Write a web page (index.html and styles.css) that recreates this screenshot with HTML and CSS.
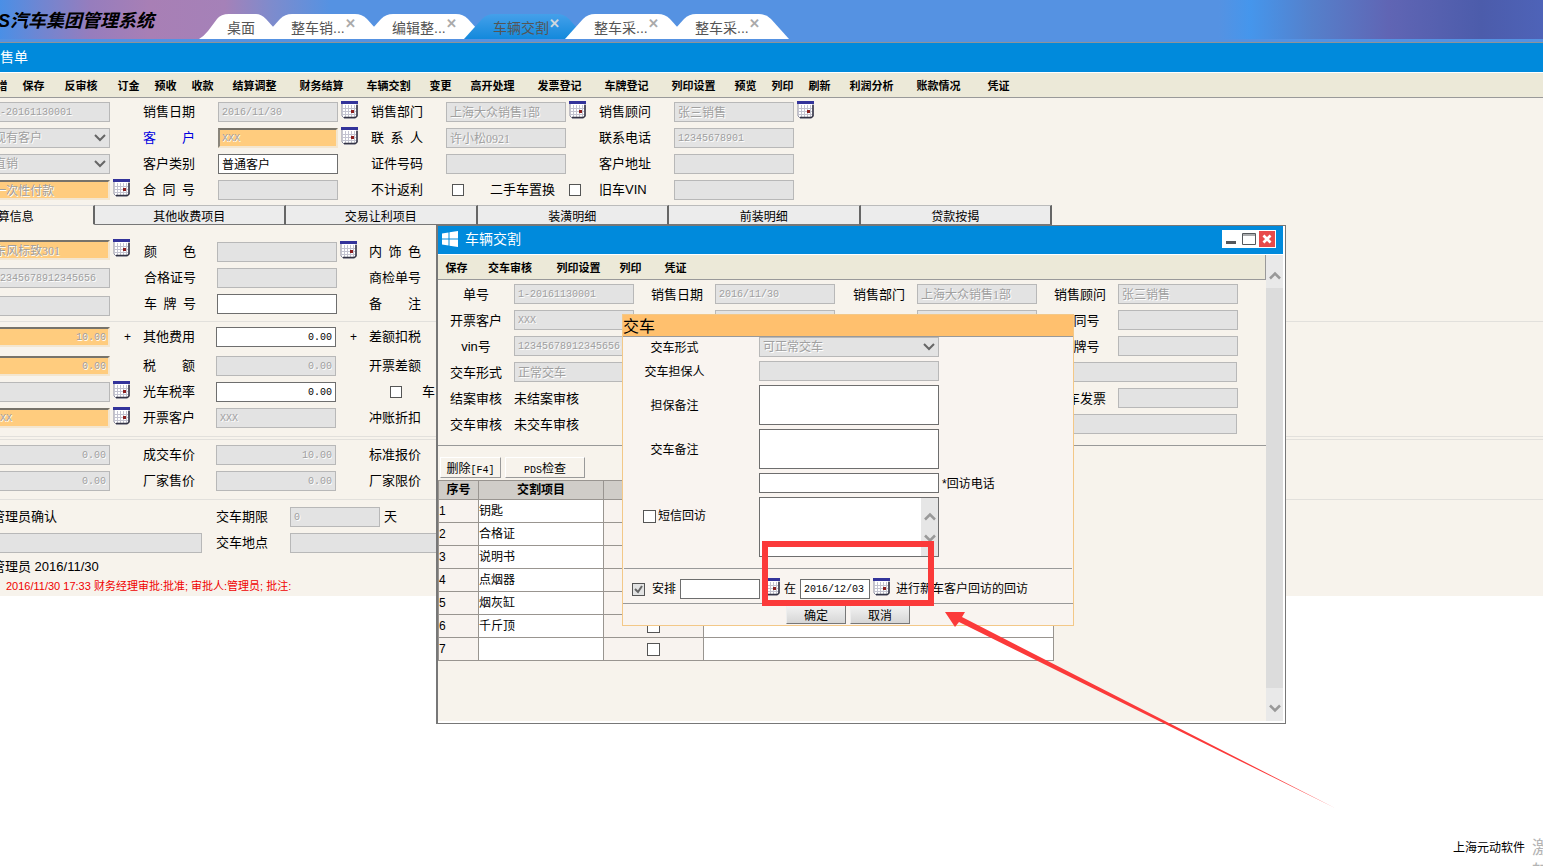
FILE: index.html
```
<!DOCTYPE html>
<html lang="zh-CN">
<head>
<meta charset="UTF-8" />
<meta name="viewport" content="width=device-width, initial-scale=1" />
<title>汽车集团管理系统</title>
<link rel="stylesheet" href="styles.css">
</head>
<body>

<svg class="defs" aria-hidden="true">
  <symbol id="cal" viewBox="0 0 17 18">
    <path d="M1 2h15v13l-2 2H3l-2-2z" fill="#fff" stroke="#8c8ca0"/>
    <path d="M4.500 4v12M7.500 4v12M10.500 4v12M13.500 4v12M1 7.500h15M1 10.500h15M1 13.500h15" stroke="#c3c3d0" fill="none"/>
    <path d="M16 4v11l-1.500 1.500H3" stroke="#333344" stroke-width="1.500" fill="none"/>
    <rect x="0" y="0" width="17" height="3" fill="#33339a"/>
    <rect x="10" y="9" width="3" height="3" fill="#8c2020"/>
  </symbol>
  <symbol id="up" viewBox="0 0 12 9"><path d="M1 7.500L6 2.500l5 5" fill="none" stroke="#999" stroke-width="2.500"/></symbol>
  <symbol id="down" viewBox="0 0 12 9"><path d="M1 1.500l5 5 5-5" fill="none" stroke="#999" stroke-width="2.500"/></symbol>
</svg>

<header class="top">
  <h1>S汽车集团管理系统</h1>
  <nav class="pages">
    <a class="page home" href="#">桌面</a>
    <a class="page" href="#">整车销...<span class="x">✕</span></a>
    <a class="page" href="#">编辑整...<span class="x">✕</span></a>
    <a class="page active" href="#">车辆交割<span class="x">✕</span></a>
    <a class="page" href="#">整车采...<span class="x">✕</span></a>
    <a class="page" href="#">整车采...<span class="x">✕</span></a>
  </nav>
</header>

<main>
  <h2 class="bar">销售单</h2>
  <div class="tools sheet-tools">
    <button>新增</button>
    <button>保存</button>
    <button class="w3">反审核</button>
    <button>订金</button>
    <button>预收</button>
    <button>收款</button>
    <button class="w4">结算调整</button>
    <button class="w4">财务结算</button>
    <button class="w4">车辆交割</button>
    <button>变更</button>
    <button class="w4">高开处理</button>
    <button class="w4">发票登记</button>
    <button class="w4">车牌登记</button>
    <button class="w4">列印设置</button>
    <button>预览</button>
    <button>列印</button>
    <button>刷新</button>
    <button class="w4">利润分析</button>
    <button class="w4">账款情况</button>
    <button class="last">凭证</button>
  </div>

  <form class="sheet">
    <section class="cols head">
      <div class="col first">
        <div class="row"><input class="num" aria-label="单号" value="1-20161130001" disabled></div>
        <div class="row"><select aria-label="客户来源" disabled><option>现有客户</option></select></div>
        <div class="row"><select aria-label="销售类型" disabled><option>直销</option></select></div>
        <div class="row"><input class="must" aria-label="付款方式" value="一次性付款" disabled><button type="button" class="cal" aria-label="选择"><svg><use href="#cal"/></svg></button></div>
      </div>
      <div class="col">
        <div class="row"><label for="a1">销售日期</label><input class="num" id="a1" value="2016/11/30" disabled><button type="button" class="cal" aria-label="选择"><svg><use href="#cal"/></svg></button></div>
        <div class="row"><label class="link" for="a2">客　　户</label><input class="num must" id="a2" value="XXX" disabled><button type="button" class="cal" aria-label="选择"><svg><use href="#cal"/></svg></button></div>
        <div class="row"><label for="a3">客户类别</label><input id="a3" value="普通客户"></div>
        <div class="row"><label for="a4">合&ensp;同&ensp;号</label><input id="a4" disabled></div>
      </div>
      <div class="col">
        <div class="row"><label for="b1">销售部门</label><input id="b1" value="上海大众销售1部" disabled><button type="button" class="cal" aria-label="选择"><svg><use href="#cal"/></svg></button></div>
        <div class="row"><label for="b2">联&ensp;系&ensp;人</label><input id="b2" value="许小松0921" disabled></div>
        <div class="row"><label for="b3">证件号码</label><input id="b3" disabled></div>
        <div class="row"><label class="wide" for="b4">不计返利</label><input type="checkbox" id="b4"><label class="used" for="b5">二手车置换</label><input type="checkbox" id="b5"></div>
      </div>
      <div class="col">
        <div class="row"><label for="c1">销售顾问</label><input id="c1" value="张三销售" disabled><button type="button" class="cal" aria-label="选择"><svg><use href="#cal"/></svg></button></div>
        <div class="row"><label for="c2">联系电话</label><input class="num" id="c2" value="12345678901" disabled></div>
        <div class="row"><label for="c3">客户地址</label><input id="c3" disabled></div>
        <div class="row"><label for="c4">旧车VIN</label><input id="c4" disabled></div>
      </div>
    </section>

    <div class="tabs">
      <button type="button" class="on">车款结算信息</button>
      <button type="button">其他收费项目</button>
      <button type="button">交易让利项目</button>
      <button type="button">装潢明细</button>
      <button type="button">前装明细</button>
      <button type="button">贷款按揭</button>
    </div>

    <section class="cols narrow car">
      <div class="col first loose">
        <div class="row"><input class="must" aria-label="车型" value="东风标致301" disabled><button type="button" class="cal" aria-label="选择"><svg><use href="#cal"/></svg></button></div>
        <div class="row"><input class="num" aria-label="vin号" value="12345678912345656" disabled></div>
        <div class="row"><input aria-label="发动机号" disabled></div>
      </div>
      <div class="col">
        <div class="row"><label for="d1">颜　　色</label><input id="d1" disabled><button type="button" class="cal" aria-label="选择"><svg><use href="#cal"/></svg></button></div>
        <div class="row"><label for="d2">合格证号</label><input id="d2" disabled></div>
        <div class="row"><label for="d3">车&ensp;牌&ensp;号</label><input id="d3"></div>
      </div>
      <div class="col">
        <div class="row"><label>内&ensp;饰&ensp;色</label></div>
        <div class="row"><label>商检单号</label></div>
        <div class="row"><label>备　　注</label></div>
      </div>
    </section>

    <section class="cols narrow price">
      <div class="col first">
        <div class="row"><input class="num must sum" aria-label="车价" value="10.00" disabled><span class="plus">+</span></div>
        <div class="row"><input class="num must sum" aria-label="合计" value="0.00" disabled></div>
        <div class="row"><input aria-label="税种" disabled><button type="button" class="cal" aria-label="选择"><svg><use href="#cal"/></svg></button></div>
        <div class="row"><input class="num must" aria-label="结算客户" value="XXX" disabled><button type="button" class="cal" aria-label="选择"><svg><use href="#cal"/></svg></button></div>
      </div>
      <div class="col">
        <div class="row"><label for="e1">其他费用</label><input class="num sum" id="e1" value="0.00"><span class="plus">+</span></div>
        <div class="row"><label for="e2">税　　额</label><input class="num sum" id="e2" value="0.00" disabled></div>
        <div class="row"><label for="e3">光车税率</label><input class="num sum" id="e3" value="0.00"></div>
        <div class="row"><label for="e4">开票客户</label><input class="num" id="e4" value="XXX" disabled></div>
      </div>
      <div class="col">
        <div class="row"><label>差额扣税</label></div>
        <div class="row"><label>开票差额</label></div>
        <div class="row ship"><input type="checkbox" id="f3"><label for="f3">车</label></div>
        <div class="row"><label>冲账折扣</label></div>
      </div>
    </section>

    <section class="cols narrow quote">
      <div class="col first">
        <div class="row"><input class="num sum" aria-label="优惠" value="0.00" disabled></div>
        <div class="row"><input class="num sum" aria-label="返利" value="0.00" disabled></div>
      </div>
      <div class="col">
        <div class="row"><label for="g1">成交车价</label><input class="num sum" id="g1" value="10.00" disabled></div>
        <div class="row"><label for="g2">厂家售价</label><input class="num sum" id="g2" value="0.00" disabled></div>
      </div>
      <div class="col">
        <div class="row"><label>标准报价</label></div>
        <div class="row"><label>厂家限价</label></div>
      </div>
    </section>

    <section class="deliver">
      <div class="row"><span class="confirm">管理员确认</span><label for="h1">交车期限</label><input class="num days" id="h1" value="0" disabled><span class="unit">天</span></div>
      <div class="row"><input class="memo" aria-label="说明" disabled><label for="h2">交车地点</label><input class="place" id="h2" disabled></div>
    </section>
    <p class="maker">管理员 2016/11/30</p>
    <p class="audit">2016/11/30 17:33 财务经理审批:批准; 审批人:管理员; 批注:</p>
  </form>
</main>

<footer>
  <span>上海元动软件</span>
  <div class="activate">激活 Windows<br>转到“设置”</div>
</footer>

<div class="window">
  <div class="caption">
    <svg class="win" viewBox="0 0 16 16"><path d="M0 2.500L6.500 1.500v6H0zM7.500 1.300L16 0v7.500H7.500zM0 8.500h6.500v6L0 13.500zM7.500 8.500H16V16l-8.500-1.300z" fill="#fff"/></svg>
    <h2>车辆交割</h2>
    <div class="ctl">
      <button aria-label="最小化"><svg viewBox="0 0 18 18"><rect x="4" y="11" width="10" height="3" fill="#55585c"/></svg></button>
      <button aria-label="最大化"><svg viewBox="0 0 18 18"><path d="M2.500 3.500h13v11h-13zM2 5h14" fill="none" stroke="#55585c"/></svg></button>
      <button class="close" aria-label="关闭"><svg viewBox="0 0 18 18"><path d="M5 5l8 8M13 5l-8 8" stroke="#fff" stroke-width="3"/></svg></button>
    </div>
  </div>

  <div class="inner">
    <div class="pane">
      <div class="tools">
        <button>保存</button>
        <button class="w4 more">交车审核</button>
        <button class="w4">列印设置</button>
        <button>列印</button>
        <button class="last">凭证</button>
      </div>
      <form class="info">
        <label for="i1">单号</label><input class="num" id="i1" value="1-20161130001" disabled>
        <label for="i2">销售日期</label><input class="num" id="i2" value="2016/11/30" disabled>
        <label for="i3">销售部门</label><input id="i3" value="上海大众销售1部" disabled>
        <label for="i4">销售顾问</label><input id="i4" value="张三销售" disabled>

        <label for="j1">开票客户</label><input class="num" id="j1" value="XXX" disabled>
        <input class="second" aria-label="颜色" disabled>
        <input class="third" aria-label="车型" disabled>
        <label for="j4">合同号</label><input id="j4" disabled>

        <label for="k1">vin号</label><input class="num" id="k1" value="12345678912345656" disabled>
        <input class="second" aria-label="发动机号" disabled>
        <input class="third" aria-label="合格证" disabled>
        <label for="k4">车牌号</label><input id="k4" disabled>

        <label for="l1">交车形式</label><input id="l1" value="正常交车" disabled>
        <input class="span" aria-label="担保人" disabled>

        <span class="name">结案审核</span><span>未结案审核</span>
        <label class="far" for="m4">购车发票</label><input id="m4" disabled>

        <span class="name">交车审核</span><span>未交车审核</span>
        <input class="span" aria-label="备注" disabled>
      </form>
      <div class="acts">
        <button>删除<span>[F4]</span></button>
        <button class="pds"><span>PDS</span>检查</button>
      </div>
      <table>
        <thead><tr><th class="no">序号</th><th class="item">交割项目</th><th class="ok"></th><th></th></tr></thead>
        <tbody>
          <tr><td>1</td><td>钥匙</td><td><input type="checkbox" aria-label="确认1"></td><td></td></tr>
          <tr><td>2</td><td>合格证</td><td><input type="checkbox" aria-label="确认2"></td><td></td></tr>
          <tr><td>3</td><td>说明书</td><td><input type="checkbox" aria-label="确认3"></td><td></td></tr>
          <tr><td>4</td><td>点烟器</td><td><input type="checkbox" aria-label="确认4"></td><td></td></tr>
          <tr><td>5</td><td>烟灰缸</td><td><input type="checkbox" aria-label="确认5"></td><td></td></tr>
          <tr><td>6</td><td>千斤顶</td><td><input type="checkbox" aria-label="确认6"></td><td></td></tr>
          <tr><td>7</td><td></td><td><input type="checkbox" aria-label="确认7"></td><td></td></tr>
        </tbody>
      </table>
    </div>
    <div class="scroll">
      <span class="arrow"><svg><use href="#up"/></svg></span>
      <span class="arrow"><svg><use href="#down"/></svg></span>
    </div>
  </div>

  <form class="modal">
    <h3>交车</h3>
    <div class="fields">
      <label for="p1">交车形式</label><select id="p1" disabled><option>可正常交车</option></select>
      <label for="p2">交车担保人</label><input id="p2" disabled>
      <label for="p3">担保备注</label><textarea id="p3"></textarea>
      <label for="p4">交车备注</label><textarea id="p4"></textarea>
      <input class="phone" id="p5"><label class="after" for="p5">*回访电话</label>
      <label class="sms"><input type="checkbox">短信回访</label>
      <div class="sms-text">
        <textarea aria-label="短信内容"></textarea>
        <div class="mini"><svg><use href="#up"/></svg><svg><use href="#down"/></svg></div>
      </div>
    </div>
    <div class="plan">
      <label><input type="checkbox" checked disabled>安排</label>
      <input class="who" aria-label="回访人">
      <button type="button" class="cal" aria-label="选择"><svg><use href="#cal"/></svg></button>
      <span>在</span>
      <input class="num when" aria-label="回访日期" value="2016/12/03">
      <button type="button" class="cal" aria-label="选择"><svg><use href="#cal"/></svg></button>
      <span class="rest">进行新车客户回访的回访</span>
    </div>
    <div class="btns">
      <button type="button">确定</button>
      <button type="button">取消</button>
    </div>
  </form>
</div>

<!-- red marker over the revisit date -->
<svg class="mark" viewBox="0 0 580 270" aria-hidden="true">
  <rect x="3" y="3" width="166" height="59" fill="none" stroke="#fb3a3a" stroke-width="6"/>
  <path d="M183 71h20l-3 5L573 267 197 81l-4 5z" fill="#fb3a3a"/>
</svg>

</body>
</html>
```
FILE: styles.css
```
* {
  box-sizing: border-box;
}
body {
  margin: 0;
  height: 100vh;
  overflow: hidden;
  position: relative;
  display: flex;
  flex-direction: column;
  background: #fff;
  color: #000;
  font-family: "Liberation Sans", "Noto Sans CJK SC", sans-serif;
  font-size: 13px;
  line-height: 20px;
}
h1, h2, h3, p {
  margin: 0;
  font-weight: normal;
}
button, input, select, textarea {
  font-family: inherit;
  margin: 0;
  padding: 0;
  border-radius: 0;
  color: #000;
}
.defs {
  position: absolute;
  width: 0;
  height: 0;
}

/* header and page tabs */
.top {
  height: 43px;
  display: flex;
  border-bottom: 1px solid #8d9399;
  background:
    linear-gradient(#5592e2, #5592e2) bottom / 100% 3px no-repeat,
    linear-gradient(90deg, #4a8fe6 0, #6f86d2 40px, #967dbd 90px, #a87fb5 150px, #a581b8 225px, #7f8bcc 270px, #5592e2 330px,
      #5592e2 79%, #4596ec 81%, #5580cb 85%, #6065b4 90%, #4c5cab 96%, #4e63b8 100%);
}
.top h1 {
  width: 199px;
  font-size: 18px;
  font-weight: bold;
  font-style: italic;
  line-height: 43px;
  white-space: nowrap;
}
.top h1 {
  text-indent: -2px;
}
.pages {
  display: flex;
  padding-top: 14px;
}
.page {
  width: 123px;
  height: 25px;
  margin-right: -22px;
  padding-left: 29px;
  background: #fff;
  color: #555;
  font-size: 14px;
  line-height: 28px;
  text-decoration: none;
  white-space: nowrap;
  clip-path: path("M0 25L18 5Q23 0 30 0H93Q100 0 105 5L123 25Z");
}
.page.home {
  width: 85px;
  padding-left: 28px;
  clip-path: path("M0 25Q5 22 9 17L18 5Q22 0 30 0H57Q62 0 67 5L85 25Z");
}
.page.active {
  position: relative;
  background: linear-gradient(#45a0ea, #1389dc);
}
.x {
  display: inline-block;
  vertical-align: top;
  font-size: 13px;
  line-height: 20px;
  font-weight: bold;
  color: #aaa;
}
.active .x {
  color: #cfd8de;
}

/* sheet */
.bar {
  height: 30px;
  background: #008adc;
  border-bottom: 1px solid #fff;
  color: #fff;
  font-size: 14px;
  line-height: 29px;
  text-indent: -14px;
}
.tools {
  height: 25px;
  display: flex;
  background: #ece9d8;
  border-bottom: 1px solid #999;
}
.sheet-tools button:first-child {
  margin-left: -22px;
}
.tools button {
  flex: none;
  width: 37px;
  padding-bottom: 1px;
  border: 0;
  background: none;
  font-size: 11px;
  font-weight: bold;
  white-space: nowrap;
}
.tools .w3 {
  width: 58px;
}
.tools .w4 {
  width: 67px;
}
.tools .more {
  width: 70px;
}
.tools .last {
  width: 53px;
}
.sheet {
  background: #f7f3ec;
  overflow: hidden;
}
.cols {
  display: grid;
  grid-template-columns: 143px 228px 228px 1fr;
}
.narrow {
  grid-template-columns: 143px 226px 1fr;
}
.col {
  display: flex;
  flex-direction: column;
  gap: 6px;
}
.first {
  margin-left: -10px;
}
.row {
  display: flex;
  align-items: center;
  height: 20px;
  white-space: nowrap;
}
.row label {
  width: 75px;
}
.narrow .row label {
  width: 73px;
}
.row .link {
  color: #0000e0;
}
label, .name, .confirm, .unit {
  line-height: 22px;
}
input, select, textarea {
  flex: none;
  width: 120px;
  height: 20px;
  padding: 0 3px;
  border: 1px solid #6e6e6e;
  background: #fff;
  font-family: "Liberation Serif", "Noto Sans CJK SC", serif;
  font-size: 12px;
  resize: none;
}
input:disabled, select:disabled {
  background-color: #e3e3e3;
  border-color: #b8b8b8;
  color: #a0a0a0;
  text-shadow: 1px 1px #fff;
  opacity: 1;
}
select {
  appearance: none;
  background-image: url("data:image/svg+xml,%3Csvg xmlns='http://www.w3.org/2000/svg' width='12' height='8'%3E%3Cpath d='M1 1l5 5 5-5' fill='none' stroke='%23666' stroke-width='2'/%3E%3C/svg%3E");
  background-repeat: no-repeat;
  background-position: right 3px center;
}
input.num {
  font-family: "Liberation Mono", monospace;
  font-size: 10px;
}
input.must:disabled {
  background: #ffcc7e;
  border: 2px solid;
  border-color: #77736a #f3e6d0 #f3e6d0 #8a857b;
  padding: 0 2px;
}
input.sum {
  text-align: right;
}
input[type=checkbox] {
  appearance: none;
  width: 12px;
  height: 12px;
  padding: 0;
  border: 1px solid #555;
}
.cal {
  flex: none;
  width: 17px;
  height: 18px;
  margin: 0 0 4px 3px;
  border: 0;
  background: none;
}
.cal svg {
  display: block;
  width: 17px;
  height: 18px;
}
.plus {
  margin-left: 14px;
  font-size: 12px;
}
.head {
  padding: 4px 0 5px;
}
.row label.wide {
  width: 81px;
}
.row label.used {
  width: 105px;
  padding-left: 26px;
}
.tabs {
  display: flex;
  width: 1149px;
  margin-left: -97px;
}
.tabs button {
  flex: 1;
  height: 20px;
  border: 0;
  border-top: 1px solid #bbb;
  border-right: 2px solid #666;
  border-bottom: 1px solid #777;
  background: #ececec;
  font-size: 12px;
  line-height: 22px;
}
.tabs .on {
  background: none;
  border-top-color: #ddd;
  border-bottom-color: transparent;
}
.car {
  padding: 15px 0 5px;
}
.car .col {
  padding: 2px 0 0 1px;
}
.car .col + .col + .col {
  padding-left: 0;
}
.car .loose {
  gap: 8px;
  padding: 0;
}
.price {
  padding: 5px 0 8px;
  border-top: 1px solid #e2e0dc;
  border-bottom: 1px solid #e2e0dc;
}
.price .row:first-child {
  margin-bottom: 3px;
}
.ship {
  padding-left: 21px;
  gap: 20px;
}
.quote {
  margin-top: 2px;
  padding: 5px 0 8px;
  border-top: 1px solid #e2e0dc;
}
.deliver {
  display: flex;
  flex-direction: column;
  gap: 6px;
  margin-left: -10px;
  padding-top: 7px;
  border-top: 1px solid #e2e0dc;
}
.deliver label {
  width: 74px;
}
.confirm {
  width: 226px;
  padding-left: 2px;
}
.memo {
  width: 212px;
  margin-right: 14px;
}
.days {
  width: 90px;
}
.unit {
  margin-left: 4px;
}
.place {
  width: 348px;
}
.maker {
  margin: 4px 0 0 -8px;
}
.audit {
  padding-left: 6px;
  color: #f00000;
  font-size: 11px;
  line-height: 19px;
}

footer {
  margin-top: auto;
  height: 30px;
  display: flex;
  justify-content: flex-end;
  font-size: 12px;
  line-height: 24px;
}
.activate {
  width: 11px;
  margin-left: 7px;
  overflow: hidden;
  white-space: nowrap;
  color: #b4b4b4;
  font-size: 18px;
}

/* delivery window */
.window {
  position: absolute;
  left: 436px;
  top: 225px;
  width: 850px;
  height: 499px;
  display: flex;
  flex-direction: column;
  padding-right: 2px;
  padding-bottom: 2px;
  background: #fff;
  border: 1px solid #777;
  border-left-width: 2px;
}
.caption {
  height: 29px;
  display: flex;
  align-items: center;
  padding: 0 7px 2px 4px;
  background: #008adc;
  border-bottom: 1px solid #fff;
}
.win {
  width: 16px;
  height: 16px;
}
.caption h2 {
  flex: 1;
  margin-left: 7px;
  color: #fff;
  font-size: 14px;
}
.ctl {
  display: flex;
  background: #fff;
}
.ctl button {
  width: 18px;
  height: 18px;
  border: 0;
  background: none;
}
.ctl .close {
  background: #e84a4a;
  border: 1px solid #fff;
}
.ctl svg {
  display: block;
}
.inner {
  flex: 1;
  display: flex;
}
.pane {
  flex: 1;
  background: #f7f3ec;
}
.pane .tools {
  border-right: 1px solid #999;
}
.info {
  display: grid;
  grid-template-columns: 76px 125px 76px 126px 76px 125px 76px 125px;
  gap: 6px 0;
  padding: 4px 0 11px;
  border-bottom: 1px solid #999;
  white-space: nowrap;
}
.info label, .info span {
  height: 20px;
  line-height: 22px;
}
.info label, .name {
  text-align: center;
}
.info .second {
  grid-column: 4;
}
.info .third {
  grid-column: 6;
}
.info .span {
  grid-column: 4 / span 5;
  width: 522px;
}
.info .far {
  grid-column: 7;
}
.acts {
  display: flex;
  gap: 4px;
  padding: 11px 0 2px 2px;
}
.acts button {
  width: 61px;
  height: 21px;
  border: 1px solid;
  border-color: #fff #999 #999 #fff;
  background: #f7f3ec;
  font-size: 12px;
}
.acts span {
  font-family: "Liberation Mono", monospace;
  font-size: 10px;
}
.acts .pds {
  width: 80px;
}
table {
  width: 616px;
  border-collapse: collapse;
  table-layout: fixed;
  font-size: 12px;
}
th, td {
  height: 23px;
  padding: 0;
  border: 1px solid #999590;
  line-height: 18px;
  background: #fff;
}
th {
  height: 19px;
  background: #d0cdc8;
}
.no {
  width: 40px;
}
.item {
  width: 125px;
}
.ok {
  width: 100px;
}
td:nth-child(odd) {
  background: #f8f3ef;
}
td:nth-child(3) {
  text-align: center;
}
td input[type=checkbox] {
  width: 13px;
  height: 13px;
  display: block;
  margin: auto;
}
.scroll {
  width: 17px;
  display: flex;
  flex-direction: column;
  justify-content: space-between;
  background: #dcdcdc;
}
.arrow {
  height: 33px;
  display: flex;
  align-items: flex-end;
  justify-content: center;
  padding-bottom: 8px;
  background: #e9e9e9;
}
.arrow svg, .mini svg {
  width: 12px;
  height: 9px;
}

/* delivery dialog */
.modal {
  position: absolute;
  left: 184px;
  top: 88px;
  width: 452px;
  background: #f9f4f0;
  border: 1px solid #f3c888;
  font-size: 12px;
}
.modal h3 {
  height: 22px;
  background: #ffc06e;
  border-bottom: 1px solid #999;
  font-size: 16px;
  line-height: 24px;
}
.fields {
  display: grid;
  grid-template-columns: 101px 180px auto;
  column-gap: 34px;
  row-gap: 4px;
  align-items: center;
  padding-bottom: 11px;
  margin: 0 1px;
  border-bottom: 1px solid #999;
}
.fields label {
  grid-column: 1;
  height: 20px;
  text-align: center;
}
.fields input, .fields select, .fields textarea {
  display: block;
  width: 180px;
}
.fields textarea {
  height: 40px;
}
.fields .phone {
  grid-column: 2;
}
.fields label.after {
  grid-column: 3;
  margin-left: -31px;
  text-align: left;
}
.fields .sms, .plan label {
  display: flex;
  align-items: center;
  justify-content: center;
  gap: 2px;
}
.modal input[type=checkbox] {
  width: 13px;
  height: 13px;
}
.fields .sms {
  margin-bottom: 22px;
}
.sms-text {
  position: relative;
}
.fields .sms-text textarea {
  height: 60px;
}
.mini {
  position: absolute;
  right: 1px;
  top: 1px;
  bottom: 1px;
  width: 17px;
  display: flex;
  flex-direction: column;
  align-items: center;
  justify-content: center;
  gap: 13px;
  background: #e6e6e6;
}
.plan {
  display: flex;
  align-items: center;
  padding: 9px 0 3px 9px;
  border-bottom: 1px solid #999;
  white-space: nowrap;
}
.plan label {
  gap: 7px;
}
.plan input:checked {
  background: #e3e3e3 url("data:image/svg+xml,%3Csvg xmlns='http://www.w3.org/2000/svg' width='11' height='11'%3E%3Cpath d='M2 5l3 3 4-6' fill='none' stroke='%23666' stroke-width='2'/%3E%3C/svg%3E") center no-repeat;
}
.plan .who {
  width: 80px;
  margin-left: 4px;
}
.plan span {
  margin: 0 4px;
}
.plan .when {
  width: 70px;
}
.plan .rest {
  margin-left: 6px;
}
.btns {
  display: flex;
  justify-content: center;
  gap: 4px;
  padding: 1px 0;
}
.btns button {
  width: 60px;
  height: 19px;
  border: 1px solid;
  border-color: #eee #777 #777 #eee;
  background: linear-gradient(#f2f2f2, #d6d6d6);
  font-size: 12px;
}

.mark {
  position: absolute;
  left: 762px;
  top: 541px;
  width: 580px;
  height: 270px;
  pointer-events: none;
}
```
